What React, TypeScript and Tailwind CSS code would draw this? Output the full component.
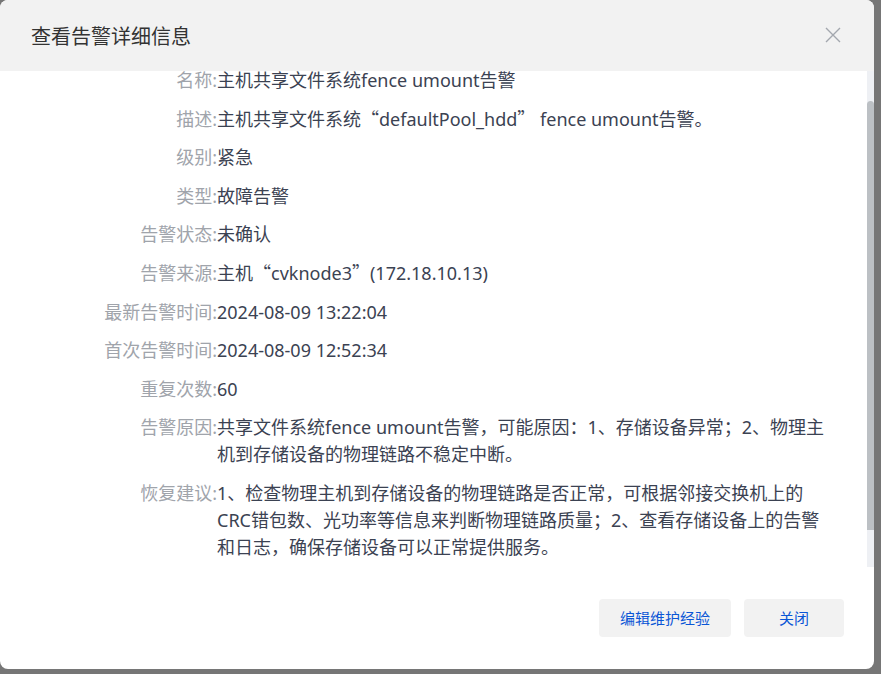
import React, { useLayoutEffect, useRef } from "react";

// quotes are full-width in the reference, so take them from the CJK font
const Q = ({ children }: { children: React.ReactNode }) => (
  <span className="font-['Noto_Sans_CJK_SC'] leading-none">{children}</span>
);

const rows: { label: string; value: React.ReactNode }[] = [
  { label: "名称", value: "主机共享文件系统fence umount告警" },
  {
    label: "描述",
    value: (
      <>
        主机共享文件系统<Q>“</Q>defaultPool_hdd<Q>”</Q> fence umount告警。
      </>
    ),
  },
  { label: "级别", value: "紧急" },
  { label: "类型", value: "故障告警" },
  { label: "告警状态", value: "未确认" },
  {
    label: "告警来源",
    value: (
      <>
        主机<Q>“</Q>cvknode3<Q>”</Q>(172.18.10.13)
      </>
    ),
  },
  { label: "最新告警时间", value: "2024-08-09 13:22:04" },
  { label: "首次告警时间", value: "2024-08-09 12:52:34" },
  { label: "重复次数", value: "60" },
  {
    label: "告警原因",
    value: "共享文件系统fence umount告警，可能原因：1、存储设备异常；2、物理主机到存储设备的物理链路不稳定中断。",
  },
  {
    label: "恢复建议",
    value:
      "1、检查物理主机到存储设备的物理链路是否正常，可根据邻接交换机上的CRC错包数、光功率等信息来判断物理链路质量；2、查看存储设备上的告警和日志，确保存储设备可以正常提供服务。",
  },
];

const AlarmDetailDialog = () => {
  const bodyRef = useRef<HTMLDivElement>(null);

  useLayoutEffect(() => {
    if (bodyRef.current) bodyRef.current.scrollTop = 35;
  }, []);

  return (
    <div className="w-screen h-screen bg-[#767676] font-['Noto_Sans','Noto_Sans_CJK_SC',sans-serif] overflow-hidden">
      <div className="w-[874px] h-[669px] bg-white rounded-[8px] overflow-hidden flex flex-col">
        {/* Header */}
        <div className="h-[71px] shrink-0 bg-[#f2f2f2] flex items-center justify-between pl-[31px] pr-[33px]">
          <h2 className="text-[20px] leading-[28px] text-[#333] font-['Noto_Sans_CJK_SC',sans-serif]">
            查看告警详细信息
          </h2>
          <svg width="16" height="16" viewBox="0 0 16 16" className="mb-[2px]">
            <path d="M1 1L15 15M15 1L1 15" stroke="#a3a7ae" strokeWidth="1.4" fill="none" />
          </svg>
        </div>

        {/* Body + scrollbar */}
        <div className="h-[496px] shrink-0 flex">
          <div ref={bodyRef} className="flex-1 overflow-hidden">
            <div className="pt-[31px] pb-[48px] pl-[57px] flex flex-col gap-[11.6px]">
              {rows.map((row) => (
                <div key={row.label} className="flex text-[18px] leading-[27px]">
                  <div className="w-[160px] shrink-0 text-right text-[#a0a4ab]">{row.label}:</div>
                  <div className="w-[618px] text-[#3b4252]">{row.value}</div>
                </div>
              ))}
            </div>
          </div>
          <div className="w-[7px] shrink-0 bg-[#eef0f4]">
            <div className="mt-[30px] h-[429px] bg-[#bcc0c4] rounded-t-[4px]" />
          </div>
        </div>

        {/* Footer */}
        <div className="flex-1 flex justify-end items-start gap-[13px] pt-[32px] pr-[30px] font-['Noto_Sans_CJK_SC',sans-serif]">
          <button className="w-[132px] h-[38px] rounded-[4px] bg-[#f2f2f2] text-[#0a56d6] text-[15px]">
            编辑维护经验
          </button>
          <button className="w-[100px] h-[38px] rounded-[4px] bg-[#f2f2f2] text-[#0a56d6] text-[15px]">
            关闭
          </button>
        </div>
      </div>
    </div>
  );
};

export default AlarmDetailDialog;
